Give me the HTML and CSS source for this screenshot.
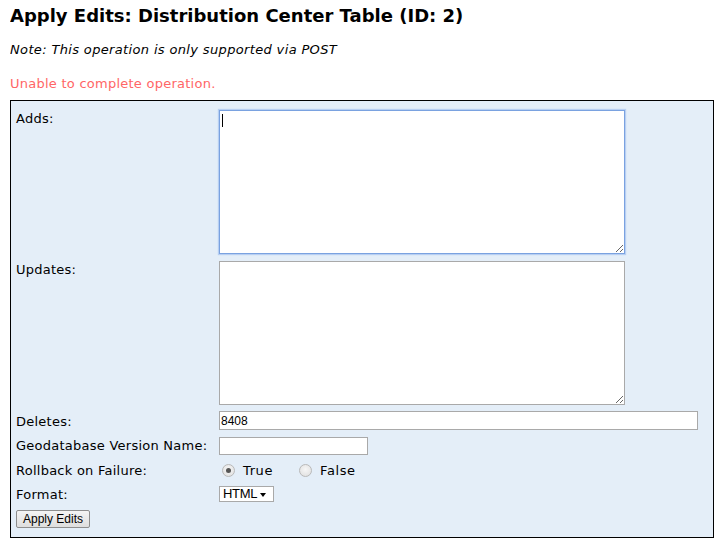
FILE: index.html
```html
<!DOCTYPE html>
<html lang="en">
<head>
    <meta charset="UTF-8">
    <meta name="viewport" content="width=device-width, initial-scale=1.0">
    <title>Apply Edits: Distribution Center Table (ID: 2)</title>

    <link rel="stylesheet" href="styles.css">
</head>
<body>
    <h2>Apply Edits: Distribution Center Table (ID: 2)</h2>
    <p class="note">Note: This operation is only supported via POST</p>
    <p class="error">Unable to complete operation.</p>

    <form class="form-table">
        <label class="label">Adds:</label>
        <div class="field">
            <div class="area-wrap">
                <textarea class="area area-active" name="adds"></textarea>
                <span class="caret"></span>
            </div>
        </div>

        <label class="label">Updates:</label>
        <div class="field">
            <textarea class="area" name="updates"></textarea>
        </div>

        <label class="label label-input">Deletes:</label>
        <div class="field row-deletes">
            <input class="text long" type="text" name="deletes" value="8408">
        </div>

        <label class="label">Geodatabase Version Name:</label>
        <div class="field">
            <input class="text short" type="text" name="gdbVersion">
        </div>

        <label class="label">Rollback on Failure:</label>
        <div class="field radios">
            <label class="radio"><input type="radio" name="rollback" checked> True</label>
            <label class="radio"><input type="radio" name="rollback"> False</label>
        </div>

        <label class="label">Format:</label>
        <div class="field">
            <span class="select-wrap">
                <select class="select" name="f">
                    <option>HTML</option>
                    <option>JSON</option>
                </select>
            </span>
        </div>

        <div class="submit-row">
            <button class="btn" type="button">Apply Edits</button>
        </div>
    </form>
</body>
</html>
```

FILE: styles.css
```css
body {
    margin: 0 10px;
    font-family: "DejaVu Sans", Verdana, sans-serif;
    font-size: 13px;
    letter-spacing: 0.25px;
    color: #000;
    background-color: #fff;
}

h2 {
    font-size: 18px;
    font-weight: bold;
    letter-spacing: 0;
    margin: 4px 0 0 0;
    line-height: 24px;
}

.note {
    font-style: italic;
    letter-spacing: 0.35px;
    margin: 14px 0 0 0;
    line-height: 16px;
}

.error {
    color: #ff6666;
    margin: 18px 0 0 0;
    line-height: 16px;
}

.form-table {
    margin-top: 8px;
    border: 1px solid #000;
    background-color: #e4eef8;
    padding: 9px 15px 9px 5px;
    display: grid;
    grid-template-columns: 203px 1fr;
    row-gap: 7px;
}

.label {
    line-height: 16px;
    padding-top: 1px;
}

.label-input {
    padding-top: 2px;
}

.row-deletes {
    margin-top: -1px;
}

.field {
    display: flex;
    align-items: flex-start;
}

.area-wrap {
    position: relative;
}

.area {
    display: block;
    width: 406px;
    height: 144px;
    box-sizing: border-box;
    border: 1px solid #a9a9a9;
    background: #fff;
    padding: 2px;
    margin: 0;
}

.area-active {
    border-color: #7aa2e0;
    box-shadow: 0 0 1px 1px #b8cff2;
}

.caret {
    position: absolute;
    left: 3px;
    top: 4px;
    width: 1px;
    height: 13px;
    background-color: #000;
}

.text {
    box-sizing: border-box;
    border: 1px solid #a9a9a9;
    background: #fff;
    font-family: "Liberation Sans", Arial, sans-serif;
    font-size: 12px;
    letter-spacing: 0;
    padding: 0 1px;
    margin: 0;
}

.long {
    width: 479px;
    height: 19px;
}

.short {
    width: 149px;
    height: 18px;
}

.radios {
    align-items: center;
    height: 16px;
    gap: 26px;
    padding-left: 3px;
}

.radio {
    display: flex;
    align-items: center;
    gap: 8px;
    letter-spacing: 0.6px;
}

.radio input {
    appearance: none;
    margin: 0;
    width: 13px;
    height: 13px;
    border-radius: 50%;
    border: 1px solid #b9b9b9;
    background: radial-gradient(circle at 50% 40%, #f6f6f6 0%, #dedede 100%);
    box-sizing: border-box;
    display: grid;
    place-items: center;
}

.radio input:checked::before {
    content: "";
    width: 5px;
    height: 5px;
    border-radius: 50%;
    background-color: #555;
}

.select-wrap {
    position: relative;
    display: inline-block;
}

.select-wrap::after {
    content: "";
    position: absolute;
    right: 8px;
    top: 7px;
    border-left: 3px solid transparent;
    border-right: 3px solid transparent;
    border-top: 4px solid #000;
    pointer-events: none;
}

.select {
    appearance: none;
    box-sizing: border-box;
    width: 55px;
    height: 16px;
    margin: 0;
    border: 1px solid #a9a9a9;
    border-radius: 0;
    background: #fff;
    font-family: "Liberation Sans", Arial, sans-serif;
    font-size: 13px;
    letter-spacing: -0.3px;
    line-height: 14px;
    padding: 0 0 0 3px;
    color: #000;
}

.submit-row {
    grid-column: 1 / span 2;
}

.btn {
    font-family: "Liberation Sans", Arial, sans-serif;
    font-size: 12px;
    letter-spacing: 0;
    height: 18px;
    padding: 0 6px;
    margin: 0;
    border: 1px solid #8e8e8e;
    border-radius: 2px;
    background: linear-gradient(#f4f4f4, #dedede);
    color: #000;
    line-height: 14px;
}
```
